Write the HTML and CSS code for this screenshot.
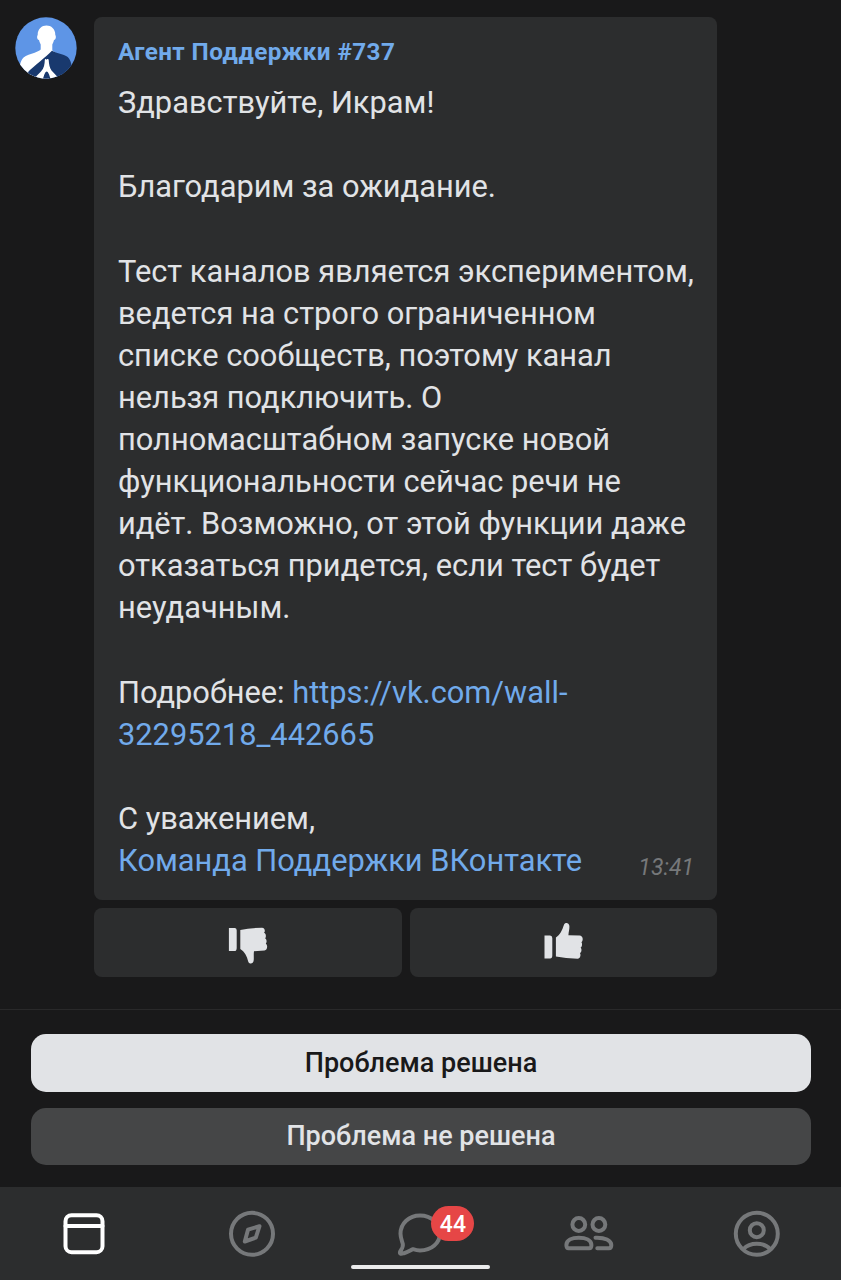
FILE: index.html
```html
<!DOCTYPE html>
<html lang="ru">
<head>
<meta charset="utf-8">
<title>Поддержка</title>
<link rel="stylesheet" href="styles.css">
</head>
<body>
<div class="app">
  <main class="chat">
    <svg class="avatar" viewBox="0 0 62 62">
      <defs><clipPath id="round"><circle cx="31" cy="31" r="30.7"/></clipPath></defs>
      <g clip-path="url(#round)">
        <rect width="62" height="62" fill="#5e95e6"/>
        <path d="M25.700 27.500Q24.500 25.500 24 23C21.800 22.500 21.800 19 22.700 18C22.300 5.200 40.700 5.200 40.300 18C41.200 19 41.200 22.500 39 23Q38.500 25.500 37.300 27.500V33.500L44 38L34 62H5C3.500 54 4.500 46 7.300 42C9.500 37.500 24 35.500 25.700 32.500Z" fill="#fff"/>
        <path d="M36.900 33.800C42.500 37 51.500 37.500 54 41.500C56.500 45 58 52 57 62H11L13.500 54.500C18 50 31 40 36.900 33.800Z" fill="#19396e"/>
        <path d="M29.800 43Q30 41.500 31.200 42L31.700 43L32.200 42Q33.600 41.500 33.700 43C34 47 34.500 51 36.500 53.500L44.500 62H35.500C34.500 58 33 54.500 31.700 54.500S29 58 28 62H18.500L26 54.500C29 51.500 29.700 47 29.800 43Z" fill="#fff"/>
      </g>
    </svg>
    <div class="thread">
      <article class="bubble">
        <h1 class="author">Агент Поддержки #737</h1>
        <div class="message">Здравствуйте, Икрам!<br><br>Благодарим за ожидание.<br><br>Тест каналов является экспериментом,<br>ведется на строго ограниченном<br>списке сообществ, поэтому канал<br>нельзя подключить. О<br>полномасштабном запуске новой<br>функциональности сейчас речи не<br>идёт. Возможно, от этой функции даже<br>отказаться придется, если тест будет<br>неудачным.<br><br>Подробнее: <a class="link">https://vk.com/wall-<br>32295218_442665</a><br><br>С уважением,</div>
        <div class="signature"><a class="link">Команда Поддержки ВКонтакте</a><time class="time">13:41</time></div>
      </article>
      <div class="votes">
        <button class="vote" aria-label="Не нравится"><svg class="thumb" viewBox="0 0 40 42">
          <path d="M.9 5.900H7Q8.700 6.100 8.700 8.300V26Q8.700 29.100 6.500 29.100H.9ZM12.300 8Q22 5.800 34 5.800C37 5.800 37.500 9.800 36 10.800C38.300 11.300 38.300 15.500 37 16.200C39 17.200 39 20.500 37.800 21.700C40 23.200 39.500 28.300 36.500 28.500L26 29.200C25.500 32.300 26 35.300 25.700 38.300C25.300 42.300 21.200 42.500 20.200 39.500C19 34.500 17 30 12.300 27Z" fill="#e1e3e6"/></svg></button>
        <button class="vote" aria-label="Нравится"><svg class="thumb" viewBox="0 0 40 42">
          <path transform="translate(-.4 0)" d="M.9 13.500H6.500Q8.700 13.500 8.700 16V33.500Q8.700 36.400 6.500 36.400H.9ZM12.300 15.500C17 12.500 18.500 8 20.300 3C21.300 0 25.400 .4 25.800 4C26 7 25 10 24.800 13.200L36 13.500C39.500 13.700 40 18.500 37.800 20.200C39 21.500 38.500 25 37 25.700C38.500 27 38 30.500 36.300 31C37.500 32.500 37 36.500 34 36.700Q22 36.500 12.300 34.500Z" fill="#e1e3e6"/></svg></button>
      </div>
    </div>
  </main>
  <section class="resolution">
    <button class="action primary">Проблема решена</button>
    <button class="action secondary">Проблема не решена</button>
  </section>
  <nav class="tabs">
    <a class="tab active"><svg class="icon" viewBox="0 0 50 50"><rect x="6.500" y="6.200" width="37" height="37" rx="6"/><path d="M6.500 17H43.500"/></svg></a>
    <a class="tab"><svg class="icon" viewBox="0 0 50 50"><circle cx="25" cy="24.800" r="21"/><path d="M21 20.700L32.500 17.200L28.800 28.600L17.800 32.500Z"/></svg></a>
    <a class="tab"><svg class="icon" viewBox="0 0 50 50"><path d="M25 6.500C14 6.500 5.500 14.500 5.500 24.800C5.500 29 7.300 32.500 7.800 35C8.500 38.500 5.800 41 5 43C4.500 45 6 45.100 9 44.200C13 43.200 15.500 41.200 18 40.200C21 41.200 23 41.500 25 41.500C36.500 41.500 45 34 45 24.300C45 14.500 36.500 6.500 25 6.500Z"/></svg><span class="badge">44</span></a>
    <a class="tab"><svg class="icon" viewBox="0 0 50 50"><circle cx="14.800" cy="15.500" r="6.400"/><circle cx="34.900" cy="15.500" r="6.400"/><path d="M2.400 36C2.400 31 8 28.700 14.800 28.700S27.400 31 27.400 36Q27.400 39.300 25.200 39.300H4.600Q2.400 39.300 2.400 36ZM31.500 28.700C41 28.300 47.300 31.500 47.300 36Q47.300 39.300 45 39.300H33.300"/></svg></a>
    <a class="tab"><svg class="icon" viewBox="0 0 50 50"><circle cx="24.800" cy="24.800" r="21"/><circle cx="24.800" cy="21.200" r="7"/><path d="M11.500 40C18 33 31.600 33 38.200 40"/></svg></a>
    <span class="home-indicator"></span>
  </nav>
</div>
</body>
</html>
```

FILE: styles.css
```css
* { box-sizing: border-box; }
body { margin: 0; background: #19191a; font-family: Roboto, "Noto Sans", sans-serif; }
button { border: 0; padding: 0; font-family: inherit; }
.app { width: 841px; height: 1280px; display: flex; flex-direction: column; overflow: hidden; }
.chat { height: 1009px; padding: 17px 0 0 15px; display: flex; align-items: flex-start; gap: 17px; }
.avatar { width: 62px; height: 62px; flex: none; }
.thread { width: 623px; display: flex; flex-direction: column; gap: 8px; }
.bubble { height: 883px; padding: 17px 23px 0 24px; border-radius: 8px; background: #2c2d2e; }
.author { margin: 0 0 12.3px; font-size: 24.3px; line-height: 36px; font-weight: 700; letter-spacing: 0.4px; color: #71aaeb; }
.message, .signature { font-size: 30.8px; line-height: 42.1px; color: #e1e3e6; white-space: nowrap; }
.link { color: #71aaeb; }
.signature { display: flex; justify-content: space-between; }
.time { font-size: 23px; line-height: 56px; font-style: italic; color: #76787a; }
.votes { display: grid; grid-template-columns: 308px 307px; gap: 8px; }
.vote { height: 69px; display: flex; align-items: center; justify-content: center; border-radius: 8px; background: #2c2d2e; }
.thumb { width: 40px; height: 42px; }
.resolution { height: 178px; padding: 24px 30px 0 31px; border-top: 1px solid #29292a; display: flex; flex-direction: column; gap: 16px; }
.action { height: 57.5px; flex: none; border-radius: 15px; font-size: 27px; font-weight: 500; line-height: 56px; }
.primary { background: #e1e3e6; color: #19191a; }
.secondary { background: #454647; color: #e1e3e6; }
.tabs { position: relative; height: 93px; display: grid; grid-template-columns: repeat(5, 1fr); background: #2c2d2e; color: #76787a; }
.tab { position: relative; padding-top: 22px; text-align: center; }
.active { color: #fff; }
.icon { width: 50px; height: 50px; fill: none; stroke: currentColor; stroke-width: 4; stroke-linecap: round; stroke-linejoin: round; }
.badge { position: absolute; left: 95px; top: 19px; width: 43px; height: 35px; border-radius: 18px; background: #e64646; color: #fff; font-size: 23px; line-height: 37px; font-weight: 500; }
.home-indicator { position: absolute; left: 351px; bottom: 11px; width: 139px; height: 4px; border-radius: 2px; background: #ebebec; }
```
